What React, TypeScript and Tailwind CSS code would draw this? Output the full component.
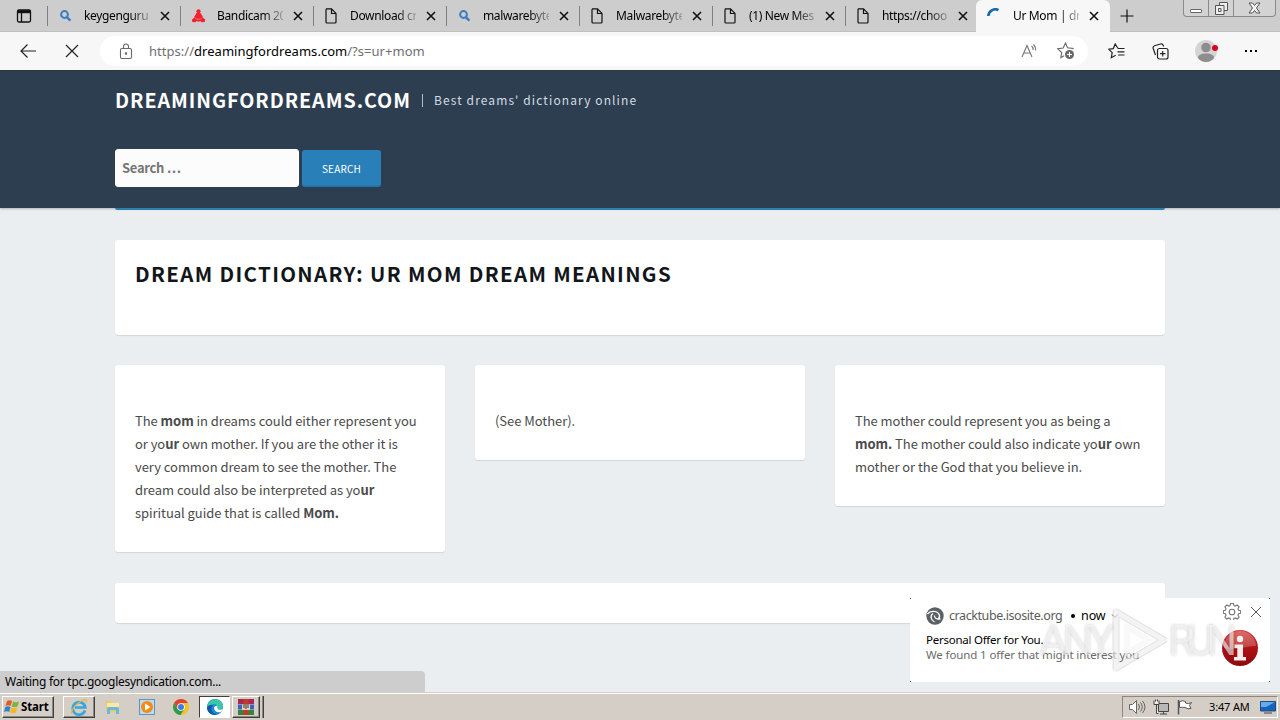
import React from "react";

interface Tab {
  title: string;
  icon: "search" | "bandicam" | "file" | "loading";
  active?: boolean;
}

const tabs: Tab[] = [
  { title: "keygenguru", icon: "search" },
  { title: "Bandicam 20", icon: "bandicam" },
  { title: "Download cr", icon: "file" },
  { title: "malwarebyte", icon: "search" },
  { title: "Malwarebyte", icon: "file" },
  { title: "(1) New Mes", icon: "file" },
  { title: "https://choo", icon: "file" },
  { title: "Ur Mom | dre", icon: "loading", active: true },
];

const TabIcon: React.FC<{ icon: Tab["icon"] }> = ({ icon }) => {
  if (icon === "search") {
    return (
      <svg className="w-4 h-4 shrink-0" viewBox="0 0 16 16" fill="none" stroke="#3b7dc0">
        <circle cx="7.500" cy="6.500" r="3.4" strokeWidth="2" />
        <path d="M10 9.300l3.400 3.400" strokeWidth="2.4" />
      </svg>
    );
  }
  if (icon === "bandicam") {
    return (
      <svg className="w-4 h-4 shrink-0" viewBox="0 0 16 16" fill="#f0222f">
        <circle cx="8.500" cy="3.300" r="2.100" />
        <path d="M6.500 5h4l2 3.300.5 1.500 2.200 1.700-.5 2.500-3.200.2-1-1.200-2 .8-2-.8-1 1.200-3.200-.2-.3-2.500 2.200-1.700.3-1.500z" />
        <path d="M5 9.500l1.500 1.700h4l1.500-1.700" stroke="#f6a0a5" strokeWidth=".6" fill="none" />
      </svg>
    );
  }
  if (icon === "file") {
    return (
      <svg className="w-4 h-4 shrink-0" viewBox="0 0 16 16" fill="none" stroke="#111" strokeWidth="1.2">
        <path d="M3.500.9h5l4.500 4.500v8.600a1 1 0 0 1-1 1h-8a1 1 0 0 1-1-1v-12a1 1 0 0 1 .5-1z" />
        <path d="M8.500 1v4.500h4.500" />
      </svg>
    );
  }
  return (
    <svg className="w-4 h-4 shrink-0" viewBox="0 0 16 16" fill="none">
      <path d="M3.300 8A7 7 0 0 1 13.500 2.100" stroke="#1467b3" strokeWidth="2.600" />
    </svg>
  );
};

const TabStrip: React.FC = () => (
  <div className="flex h-8 shrink-0 bg-[#cdcdcd] border-b border-[#c0c0c0]">
    <div className="w-[47px] flex items-center pl-4">
      <svg className="w-4 h-4" viewBox="0 0 16 16" fill="none" stroke="#111" strokeWidth="1.300">
        <rect x="1.500" y="2" width="13" height="12" rx="1.500" />
        <path d="M1.500 3.700h13" strokeWidth="3" />
        <path d="M5.500 5v9" />
      </svg>
    </div>
    {tabs.map((tab, i) => (
      <div
        key={i}
        className={
          tab.active
            ? "w-[134px] h-8 -ml-0.5 flex items-center rounded-t-md bg-[#f7f7f7] pl-[9px]"
            : "w-[133px] flex items-center pl-[10px] relative before:content-[''] before:absolute before:left-0 before:top-[6px] before:w-px before:h-5 before:bg-[#808080]"
        }
      >
        <TabIcon icon={tab.icon} />
        <div
          className={
            "h-5 leading-5 whitespace-nowrap text-[12px] tracking-[-0.35px] text-black [mask-image:linear-gradient(to_right,black_46px,transparent_72px)] " +
            (tab.active ? "ml-[12px] w-[66px]" : "ml-[11px] w-[66px]")
          }
        >
          {tab.title}
        </div>
        <svg
          className={"w-3 h-3 shrink-0 " + (tab.active ? "ml-[9px]" : "ml-[9px]")}
          viewBox="0 0 12 12"
          stroke="#111"
          strokeWidth="1.600"
        >
          <path d="M2 2l8 8M10 2l-8 8" />
        </svg>
      </div>
    ))}
    <svg className="w-4 h-4 mt-2 ml-[9px]" viewBox="0 0 16 16" stroke="#111" strokeWidth="1.200">
      <path d="M8 1.500v13M1.500 8h13" />
    </svg>
    <div className="ml-auto mr-1 flex h-[17px] w-[93px] rounded-b border border-t-0 border-[#8a8a8a] bg-[#d3d3d3]">
      <div className="w-[25px] flex items-end justify-center pb-[3px] border-r border-[#8a8a8a]">
        <div className="w-3 h-1 border border-[#666] bg-white rounded-[1px]" />
      </div>
      <div className="w-[25px] flex items-center justify-center border-r border-[#8a8a8a]">
        <svg className="w-[13px] h-[13px]" viewBox="0 0 13 13" fill="#eee" stroke="#555">
          <path d="M4.500.5h8v8h-8z" />
          <path d="M.5 3.500h8.500v9h-8.500z" />
          <path d="M3.500 6.500h2.500v3h-2.500z" />
        </svg>
      </div>
      <div className="flex-1 flex items-center justify-center">
        <svg className="w-[13px] h-3" viewBox="0 0 13 12" fill="#f2f2f2" stroke="#555">
          <path d="M1 1h3.500l2 2.500 2-2.500h3.500l-3.500 5 3.500 5h-3.500l-2-2.500-2 2.500h-3.500l3.500-5z" />
        </svg>
      </div>
    </div>
  </div>
);

const Toolbar: React.FC = () => (
  <div className="flex items-center h-[38px] shrink-0 bg-[#f7f7f7]">
    <svg className="w-4 h-4 ml-5" viewBox="0 0 16 16" fill="none" stroke="#222" strokeWidth="1.200">
      <path d="M7.500 1.500L1 8l6.500 6.500M1 8h15" />
    </svg>
    <svg className="w-[14px] h-[14px] ml-[29px]" viewBox="0 0 14 14" stroke="#222" strokeWidth="1.200">
      <path d="M1 1l12 12M13 1l-12 12" />
    </svg>
    <div className="ml-[21px] w-[988px] h-[30px] rounded-full bg-white flex items-center pl-[19px]">
      <svg className="w-[14px] h-[17px]" viewBox="0 0 14 17" fill="none" stroke="#686868" strokeWidth="1.100">
        <rect x="1.500" y="5.500" width="11" height="10" rx="1.500" />
        <path d="M4.500 5.500v-2a2.500 2.500 0 0 1 5 0v2" />
        <circle cx="7" cy="10.500" r=".7" fill="#686868" />
      </svg>
      <div className="ml-4 text-[13px] leading-5 whitespace-nowrap tracking-[0.03px] text-[#6f6f6f]">
        https://<span className="text-black">dreamingfordreams.com</span>/?s=ur+mom
      </div>
      <svg className="ml-auto w-[17px] h-4" viewBox="0 0 17 16" fill="none" stroke="#777" strokeWidth="1.100">
        <path d="M1 14L6 2.500 11 14M2.800 10h6.500" />
        <path d="M10.500 3a4 4 0 0 1 1.500 4M12.500 1.500a7 7 0 0 1 2 6" />
      </svg>
      <svg className="ml-[19px] mr-[13px] w-[18px] h-[18px]" viewBox="0 0 18 18" fill="none" stroke="#666" strokeWidth="1.100">
        <path d="M15.500 7.200l.5-.7-5.500-.7L8.500 1 6.200 6 .8 6.800l3.900 3.700-.9 5.200L7 13.800" />
        <circle cx="12.500" cy="12.500" r="4.500" fill="#666" stroke="none" />
        <path d="M12.500 10v5M10 12.500h5" stroke="white" />
      </svg>
    </div>
    <svg className="ml-5 w-[17px] h-4" viewBox="0 0 17 16" fill="none" stroke="#222" strokeWidth="1.200">
      <path d="M10 5.500L7.200 1 5.300 5.600.7 6.200l3.500 3.500-.9 5 4.400-2.400M10 5.500h6.500M9.500 8.800h7M10 12h6.500" />
    </svg>
    <svg className="ml-[27px] w-[17px] h-[17px]" viewBox="0 0 17 17" fill="none" stroke="#222" strokeWidth="1.200">
      <rect x="5.500" y="5.500" width="10.500" height="10.500" rx="2" />
      <path d="M10.700 8v5.500M8 10.700h5.500M3.500 12L1.200 5.500C.8 4 1.300 3.200 2.500 2.800l6-1.800c1.500-.4 2.300.1 2.800 1.500l.3 1" />
    </svg>
    <svg className="ml-[25px] w-6 h-6" viewBox="0 0 24 24">
      <circle cx="12" cy="12" r="11" fill="#d4d4d4" />
      <circle cx="12" cy="8.500" r="4.800" fill="#8d8d8d" />
      <path d="M4 19c0-3 3-4.500 8-4.500s8 1.500 8 4.500c-2 2.600-5 4-8 4s-6-1.400-8-4z" fill="#8d8d8d" />
      <circle cx="21" cy="9" r="3" fill="#d9041c" />
    </svg>
    <div className="ml-[27px] flex gap-[3px]">
      <span className="w-[2px] h-[2px] bg-black" />
      <span className="w-[2px] h-[2px] bg-black" />
      <span className="w-[2px] h-[2px] bg-black" />
    </div>
  </div>
);

const Card: React.FC<{ className: string; children?: React.ReactNode }> = ({ className, children }) => (
  <div className={"bg-white rounded-[3px] shadow-[0_1px_1px_rgba(0,0,0,0.1)] " + className}>{children}</div>
);

const SitePage: React.FC = () => (
  <div className="font-['Noto_Sans_CJK_SC',sans-serif]">
    <div className="h-[138px] bg-[#2d3e50] border-t border-[#30363b] shadow-[0_1px_2px_rgba(0,0,0,0.25)]">
      <div className="w-[1050px] mx-auto">
        <div className="flex items-center h-[58px] whitespace-nowrap">
          <div className="text-[19.7px] font-bold tracking-[0.95px] text-white w-[307px]">DREAMINGFORDREAMS.COM</div>
          <div className="w-px h-[13px] bg-[#b3bcc5]" />
          <div className="ml-[11px] text-[12px] tracking-[1.1px] text-[#d3dbe3]">Best dreams&#39; dictionary online</div>
        </div>
        <div className="flex items-center gap-[3px] mt-5">
          <div className="w-[184px] h-[38px] rounded-[3px] bg-[#fcfcfc] border border-white pl-[6px] leading-9 text-[13px] font-bold tracking-[-0.3px] text-[#757575]">
            Search …
          </div>
          <button className="w-[79px] h-[37px] rounded-[3px] bg-[#2980b9] border-b-2 border-[#2475ab] pt-[2px] text-[10px] tracking-[0.2px] text-white">
            SEARCH
          </button>
        </div>
      </div>
    </div>
    <div className="w-[1050px] mx-auto">
      <div className="relative h-[2px] bg-[#2f7fae] rounded-b-sm" />
      <Card className="mt-[30px] h-[95px] px-5 pt-[18px]">
        <h1 className="text-[20.5px] leading-[30px] font-bold tracking-[1.33px] text-[#12161a] whitespace-nowrap">
          DREAM DICTIONARY: UR MOM DREAM MEANINGS
        </h1>
      </Card>
      <div className="mt-[30px] flex items-start gap-[30px] text-[13px] leading-[23px] tracking-[-0.05px] text-[#4a4a4a] whitespace-nowrap">
        <Card className="w-[330px] pt-11 pb-7 px-5">
          The <b>mom</b> in dreams could either represent you
          <br />
          or yo<b>ur</b> own mother. If you are the other it is
          <br />
          very common dream to see the mother. The
          <br />
          dream could also be interpreted as yo<b>ur</b>
          <br />
          spiritual guide that is called <b>Mom.</b>
        </Card>
        <Card className="w-[330px] pt-11 pb-7 px-5">(See Mother).</Card>
        <Card className="w-[330px] pt-11 pb-7 px-5">
          The mother could represent you as being a
          <br />
          <b>mom.</b> The mother could also indicate yo<b>ur</b> own
          <br />
          mother or the God that you believe in.
        </Card>
      </div>
      <Card className="mt-[31px] h-10" />
    </div>
  </div>
);

const Notification: React.FC = () => (
  <div className="absolute left-[910px] top-[528px] w-[360px] h-[84px] bg-white">
    <div className="flex items-center h-[35px] pl-4 pt-px">
      <svg className="w-[18px] h-[18px]" viewBox="0 0 18 18">
        <circle cx="9" cy="9" r="8.700" fill="#5b6065" />
        <path d="M1.500 7C4 3.500 12 3 13.500 8.500c.3 1.700-.5 3-2 3.500M7 6.500c-3 2-2.500 6.500 1.500 8.500M8.500 8.500c-.5 2.500 2.500 4.300 6 3.500" fill="none" stroke="white" strokeWidth="1.300" />
      </svg>
      <span className="ml-[5px] w-[122px] text-[12.500px] tracking-[-0.42px] text-[#5c5c5c]">cracktube.isosite.org</span>
      <span className="w-1 h-1 rounded-full bg-black" />
      <span className="ml-[6px] text-[12.500px] tracking-[-0.1px] text-black">now</span>
      <svg className="ml-[5px] w-2 h-2" viewBox="0 0 8 8" fill="none" stroke="#777">
        <path d="M1 2.500l3 3 3-3" />
      </svg>
    </div>
    <div className="pl-4 -mt-px text-[11.500px] leading-[15px] tracking-[-0.12px] whitespace-nowrap">
      <div className="text-black tracking-[-0.25px]">Personal Offer for You.</div>
      <div className="text-[#6b6b6b]">We found 1 offer that might interest you</div>
    </div>
    <svg className="absolute left-[313px] top-[4px] w-[18px] h-[18px]" viewBox="0 0 18 18" fill="none" stroke="#777" strokeWidth="1.100">
      <path d="M7.600 1.500h2.800l.5 2 1.400.6 1.900-1.100 1.900 1.900-1.100 1.900.6 1.400 2 .5v2.600l-2 .5-.6 1.400 1.100 1.900-1.900 1.900-1.900-1.100-1.400.6-.5 2H7.600l-.5-2-1.400-.6-1.900 1.100-1.900-1.900L3 13.200l-.6-1.400-2-.5V8.700l2-.5L3 6.800 1.900 4.900 3.800 3l1.900 1.100 1.400-.6z" />
      <circle cx="9" cy="10" r="2.800" />
    </svg>
    <svg className="absolute left-[341px] top-[9px] w-[10px] h-[10px]" viewBox="0 0 10 10" stroke="#555">
      <path d="M0 0l10 10M10 0L0 10" />
    </svg>
    <svg className="absolute left-[312px] top-8 w-9 h-9" viewBox="0 0 36 36">
      <defs>
        <linearGradient id="infoRed" x1="0" y1="0" x2="0" y2="1">
          <stop offset="0" stopColor="#d5413f" />
          <stop offset=".5" stopColor="#ae1215" />
          <stop offset="1" stopColor="#8d0a0c" />
        </linearGradient>
      </defs>
      <circle cx="18" cy="18" r="18" fill="url(#infoRed)" />
      <path d="M2 18a16 16 0 0 1 32-2c-9-1-16 5-32 2z" fill="#fff" opacity=".22" />
      <circle cx="18" cy="9" r="3.200" fill="#f6eeee" />
      <path d="M12.500 14.500h8.500v12.500h3v3.500h-12v-3.500h3.300v-9h-2.800z" fill="#f6eeee" />
    </svg>
    {["left-0 top-0", "right-0 top-0", "left-0 bottom-0", "right-0 bottom-0"].map((pos) => (
      <span key={pos} className={"absolute w-px h-px bg-[#555] " + pos} />
    ))}
  </div>
);

const Watermark: React.FC = () => (
  <div className="absolute left-[1039px] top-[532px] flex items-center h-[76px] text-[43px] font-['Roboto',sans-serif] font-normal text-white/60 [text-shadow:0_0_3px_rgba(0,0,0,0.2)]">
    <span className="w-[68px] tracking-[-4.500px]">ANY</span>
    <svg className="w-[61px] h-16" viewBox="0 0 61 64" fill="none">
      <path d="M9 4L57 32 9 60V4z" stroke="#000" strokeOpacity=".12" strokeWidth="7" strokeLinejoin="round" />
      <path d="M20 19v26l22-13z" stroke="#000" strokeOpacity=".07" strokeWidth="5" />
      <path d="M9 4L57 32 9 60V4zM20 19v26l22-13z" stroke="#fff" strokeOpacity=".6" strokeWidth="5" />
    </svg>
    <span className="tracking-[-8px]">RUN</span>
  </div>
);

const bevel = "border border-t-white border-l-white border-r-[#404040] border-b-[#404040] shadow-[inset_-1px_-1px_0_#8c8780]";

const Taskbar: React.FC = () => (
  <div className="flex items-center h-7 shrink-0 bg-[#d5cec6] border-t border-[#d5cec6] shadow-[inset_0_1px_0_#fff] pl-0.5 pr-[2px] pt-px relative">
    <div className={"w-[52px] h-[22px] flex items-center pl-px bg-[#d5cec6] " + bevel}>
      <svg className="w-4 h-4" viewBox="0 0 16 16">
        <path d="M3 2q2.500-1.500 5 0L6.700 7Q4 5.500 1.500 7z" fill="#e95922" />
        <path d="M9 2.500q2.500 1.500 6 0L13.500 7.500Q10 9 7.700 7.500z" fill="#7eb53b" />
        <path d="M1.300 8Q4 6.500 6.500 8l-1.300 5Q3 11.500 0 13z" fill="#2f82c9" />
        <path d="M7.400 8.500q3 1.500 5.900 0l-1.400 5Q9 15 6 13.500z" fill="#f8b623" />
      </svg>
      <span className="ml-px text-[11.500px] font-bold tracking-[-0.15px] text-black">Start</span>
    </div>
    <div className={"ml-[9px] w-8 h-[22px] flex items-center justify-center " + bevel}>
      <svg className="w-[18px] h-[18px]" viewBox="0 0 18 18" fill="none">
        <path d="M15 12.500A6.300 6.300 0 1 1 15.300 9.500H5" stroke="#38a5dd" strokeWidth="2.700" />
        <path d="M2 16C0 13 6 5 13 2c3-1.200 4 .3 3 2.500" stroke="#e5b73c" strokeWidth="1.200" />
      </svg>
    </div>
    <svg className="ml-[9px] w-[18px] h-[18px]" viewBox="0 0 18 18">
      <path d="M2 3h5l1 2h7v9H2z" fill="#e9cc68" />
      <path d="M3 5h12v4H3z" fill="#f9e9a8" />
      <path d="M3 16v-5q0-2 2-2h8q2 0 2 2v5h-3v-4H6v4z" fill="#6ab8dc" />
    </svg>
    <svg className="ml-[17px] w-4 h-4" viewBox="0 0 16 16">
      <rect x=".5" y=".5" width="15" height="15" fill="#b9dcf2" stroke="#5a95c4" />
      <circle cx="8" cy="8" r="6" fill="#f58a14" />
      <path d="M6 4.500v7l5.500-3.500z" fill="white" />
    </svg>
    <svg className="ml-[18px] w-4 h-4" viewBox="0 0 16 16">
      <circle cx="8" cy="8" r="8" fill="#f3c225" />
      <path d="M1.100 4A8 8 0 0 1 14.900 4H8L4.500 10z" fill="#df4331" />
      <path d="M1.100 4A8 8 0 0 0 7.500 16l3.800-6H4.500z" fill="#2d9b4e" />
      <circle cx="8" cy="8" r="3.800" fill="white" />
      <circle cx="8" cy="8" r="3" fill="#3c7de0" />
    </svg>
    <div className="ml-[10px] w-[31px] h-[22px] flex items-center justify-center bg-white border border-t-[#404040] border-l-[#404040] border-r-white border-b-white">
      <svg className="w-4 h-4" viewBox="0 0 16 16">
        <circle cx="8" cy="8" r="8" fill="#168bd2" />
        <path d="M1 5C3 1 7-.5 11 .6c4 1.400 5.500 5 4.800 8-.8 2-3.300 2.600-5.800 1.600 1.500-1.700.5-4.700-2.500-4.900C4.500 5 2 6 .3 9z" fill="#3ec4a6" />
        <path d="M5.500 6.500C3 9 4.500 14.500 10 15.700 4 17 0 13 0 8.500 1 6.500 3.500 5.500 5.500 6.500z" fill="#0c59a4" />
        <path d="M7 8.500c1-1 2-2 3.500-1.500-.5 2 0 3 1 3.500 1.500.5 3 .2 4.300-.7-.5 1.500-1.200 2.700-2.200 3.200C10 14 7 12 7 8.500z" fill="white" />
      </svg>
    </div>
    <div className={"ml-0.5 w-7 h-[22px] flex items-center justify-center " + bevel}>
      <svg className="w-4 h-4" viewBox="0 0 16 16">
        <path d="M0 0h16v5H0z" fill="#a52a54" />
        <path d="M0 5.500h16v5H0z" fill="#3c63b8" />
        <path d="M0 11h16v5H0z" fill="#34843c" />
        <path d="M5.500 0h5v16h-5z" fill="#c4382c" />
        <path d="M4 5.500h8v5.500H4z" fill="#ddd4c0" />
        <path d="M6 5.500v3.500M8 5.500v4.500M10 5.500v3.500" stroke="#333" />
      </svg>
    </div>
    <div className="w-1 h-[22px] border-r border-[#404040] shadow-[inset_-1px_0_0_#8c8780]" />
    <div className="ml-auto w-[156px] h-[22px] flex items-center pl-[6px] border border-t-[#8c8780] border-l-[#8c8780] border-r-white border-b-white">
      <svg className="w-[17px] h-4" viewBox="0 0 17 16" fill="#fff" stroke="#666">
        <path d="M.5 5.500h3l4-4v13l-4-4h-3z" />
        <path d="M9.500 5q2 3 0 6M11.500 3.500q3.500 4.500 0 9M13.500 2q5 6 0 12" fill="none" />
      </svg>
      <svg className="ml-[7px] w-[17px] h-4" viewBox="0 0 17 16" fill="#eee" stroke="#444">
        <path d="M5.500 4.500h10v8h-10z" fill="#b8b8b8" />
        <path d="M7 15h7M10.500 13v2" />
        <path d="M1 1.500v4h5v-4M2.500.5v2M4.500.5v2M3.500 5.500v9h2" />
      </svg>
      <svg className="ml-[7px] w-[17px] h-4" viewBox="0 0 17 16" fill="#fff" stroke="#555">
        <path d="M1.500 1v14.500" strokeWidth="1.500" />
        <path d="M2.500 2.500q3-1.500 6 0v1.500q3 1.500 6-.5l-2 3 1.500 3q-3 1-6-1-2.500-.5-5.500 0z" />
      </svg>
      <span className="ml-[15px] text-[11px] text-black whitespace-nowrap tracking-[-0.15px]">3:47 AM</span>
      <svg className="ml-auto mr-px w-4 h-[14px]" viewBox="0 0 16 14">
        <path d="M.5 1.500h15v9.500H.5z" fill="#1764c0" stroke="#274a79" />
        <path d="M1 2h14l-9 5H1z" fill="#68aaf0" />
        <path d="M4 13h8" stroke="#444" />
      </svg>
    </div>
  </div>
);

const App: React.FC = () => (
  <div className="w-[1280px] h-[720px] overflow-hidden flex flex-col bg-[#eaeef1] font-['Noto_Sans',sans-serif]">
    <TabStrip />
    <Toolbar />
    <div className="relative flex-1 min-h-0 overflow-hidden">
      <SitePage />
      <div className="absolute left-0 bottom-0 w-[425px] h-[21px] rounded-tr bg-[#cdcdcd] pl-[5px] text-[12px] leading-[21px] tracking-[-0.27px] text-black whitespace-nowrap">
        Waiting for tpc.googlesyndication.com...
      </div>
      <Notification />
      <Watermark />
    </div>
    <Taskbar />
  </div>
);

export default App;
